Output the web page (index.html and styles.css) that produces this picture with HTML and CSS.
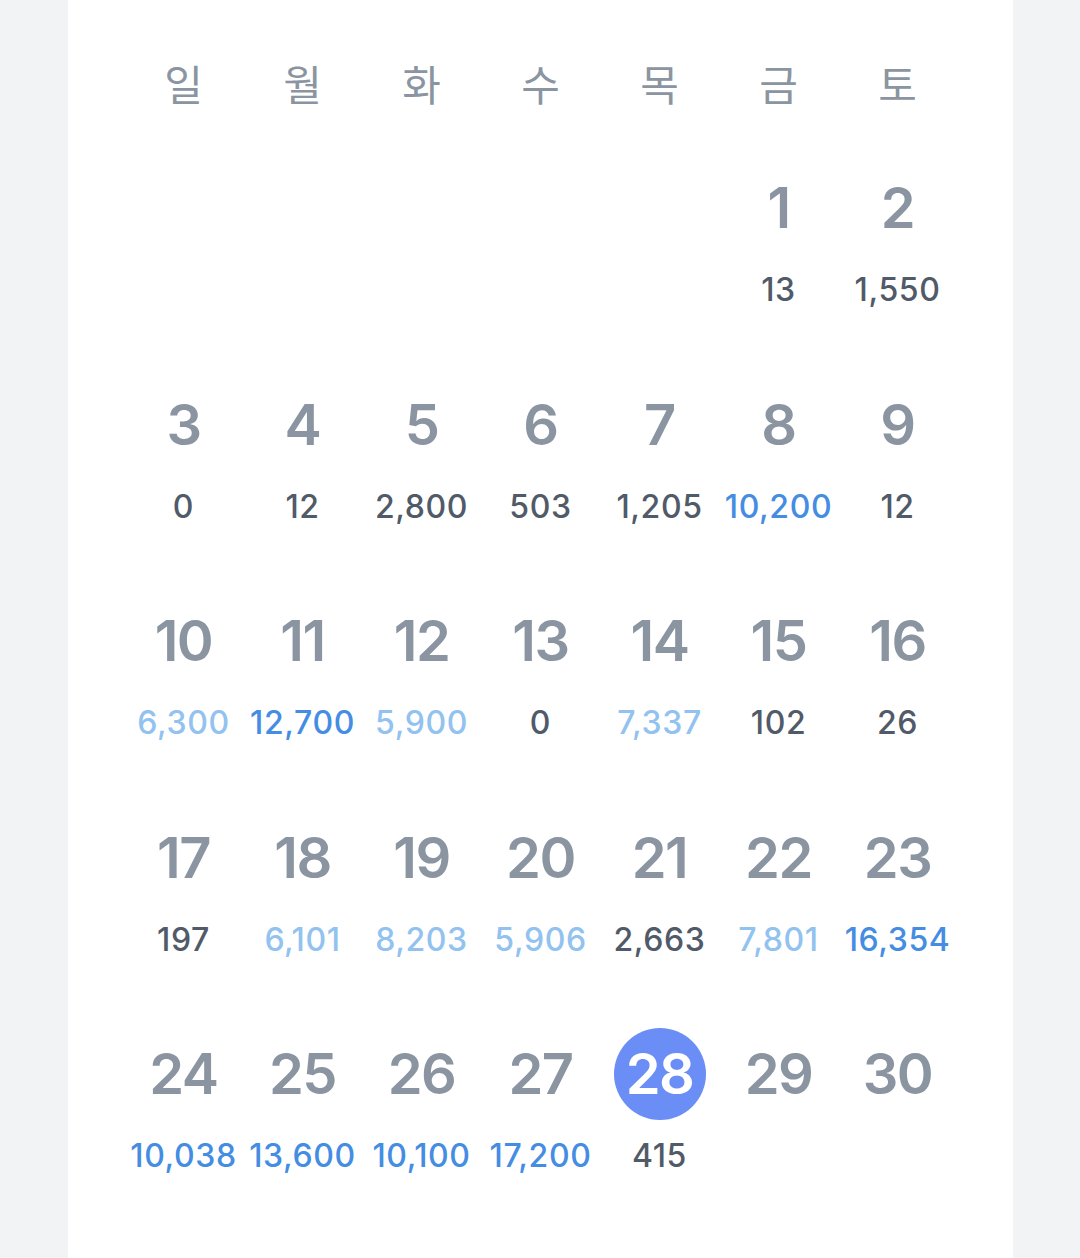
FILE: index.html
```html
<!DOCTYPE html>
<html lang="ko">
<head>
<meta charset="utf-8">
<link rel="stylesheet" href="styles.css">
</head>
<body>
<div class="page">
  <div class="card">
    <div class="weekdays">
      <div>일</div><div>월</div><div>화</div><div>수</div><div>목</div><div>금</div><div>토</div>
    </div>
    <div class="weeks">
      <div class="cell"></div><div class="cell"></div><div class="cell"></div><div class="cell"></div><div class="cell"></div>
      <div class="cell"><div class="num">1</div><div class="val">13</div></div>
      <div class="cell"><div class="num">2</div><div class="val">1,550</div></div>

      <div class="cell"><div class="num">3</div><div class="val">0</div></div>
      <div class="cell"><div class="num">4</div><div class="val">12</div></div>
      <div class="cell"><div class="num">5</div><div class="val">2,800</div></div>
      <div class="cell"><div class="num">6</div><div class="val">503</div></div>
      <div class="cell"><div class="num">7</div><div class="val">1,205</div></div>
      <div class="cell"><div class="num">8</div><div class="val blue">10,200</div></div>
      <div class="cell"><div class="num">9</div><div class="val">12</div></div>

      <div class="cell"><div class="num">10</div><div class="val light">6,300</div></div>
      <div class="cell"><div class="num">11</div><div class="val blue">12,700</div></div>
      <div class="cell"><div class="num">12</div><div class="val light">5,900</div></div>
      <div class="cell"><div class="num">13</div><div class="val">0</div></div>
      <div class="cell"><div class="num">14</div><div class="val light">7,337</div></div>
      <div class="cell"><div class="num">15</div><div class="val">102</div></div>
      <div class="cell"><div class="num">16</div><div class="val">26</div></div>

      <div class="cell"><div class="num">17</div><div class="val">197</div></div>
      <div class="cell"><div class="num">18</div><div class="val light">6,101</div></div>
      <div class="cell"><div class="num">19</div><div class="val light">8,203</div></div>
      <div class="cell"><div class="num">20</div><div class="val light">5,906</div></div>
      <div class="cell"><div class="num">21</div><div class="val">2,663</div></div>
      <div class="cell"><div class="num">22</div><div class="val light">7,801</div></div>
      <div class="cell"><div class="num">23</div><div class="val blue">16,354</div></div>

      <div class="cell"><div class="num">24</div><div class="val blue">10,038</div></div>
      <div class="cell"><div class="num">25</div><div class="val blue">13,600</div></div>
      <div class="cell"><div class="num">26</div><div class="val blue">10,100</div></div>
      <div class="cell"><div class="num">27</div><div class="val blue">17,200</div></div>
      <div class="cell"><div class="num today"><span>28</span></div><div class="val">415</div></div>
      <div class="cell"><div class="num">29</div><div class="val"></div></div>
      <div class="cell"><div class="num">30</div><div class="val"></div></div>
    </div>
  </div>
</div>
</body>
</html>
```
FILE: styles.css
```css
html, body {
  margin: 0;
  padding: 0;
  background: #f2f3f5;
}
.page {
  width: 1080px;
  height: 1258px;
  display: flex;
  padding-left: 68px;
  box-sizing: border-box;
  overflow: hidden;
}
.card {
  width: 945px;
  height: 1258px;
  background: #ffffff;
  box-sizing: border-box;
  padding: 53px 56px 0 56px;
  font-family: Inter, "Noto Sans", sans-serif;
}
.weekdays {
  display: grid;
  grid-template-columns: repeat(7, 119px);
  height: 60px;
  align-items: center;
  font-family: "Noto Sans CJK KR", "Noto Sans", sans-serif;
  font-size: 42px;
  font-weight: 400;
  color: #8b95a1;
  text-align: center;
  line-height: 60px;
}
.weeks {
  margin-top: 49px;
  display: grid;
  grid-template-columns: repeat(7, 119px);
  grid-auto-rows: 148px;
  row-gap: 68.5px;
}
.cell {
  display: flex;
  flex-direction: column;
  align-items: center;
  gap: 16px;
}
.num {
  height: 92px;
  display: flex;
  align-items: center;
  justify-content: center;
  font-size: 56px;
  font-weight: 600;
  color: #8b95a1;
  letter-spacing: -1.5px;
}
.num.today span {
  width: 92px;
  height: 92px;
  border-radius: 50%;
  background: #6a8ef6;
  color: #ffffff;
  display: flex;
  align-items: center;
  justify-content: center;
}
.val {
  height: 40px;
  line-height: 40px;
  font-size: 32px;
  font-weight: 500;
  color: #505a68;
  white-space: nowrap;
  letter-spacing: 0.6px;
}
.val.blue {
  color: #448de3;
}
.val.light {
  color: #91c2f0;
}
```
